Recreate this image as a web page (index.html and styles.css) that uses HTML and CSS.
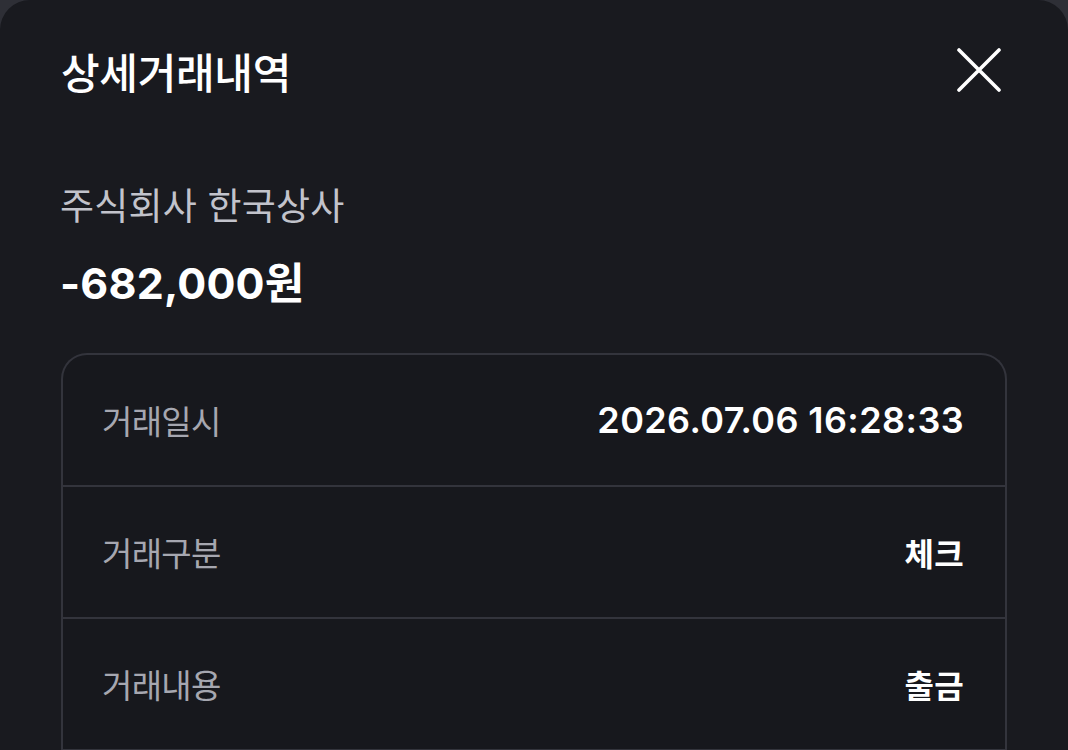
FILE: index.html
```html
<!DOCTYPE html>
<html lang="ko">
<head>
<meta charset="utf-8">
<link rel="stylesheet" href="styles.css">
</head>
<body>
<div class="sheet">
  <header class="header">
    <h1 class="title">상세거래내역</h1>
    <button class="close" aria-label="닫기">
      <svg width="44" height="44" viewBox="0 0 44 44"><path d="M2 2 L42 42 M42 2 L2 42" stroke="#fff" stroke-width="3.6" stroke-linecap="round" fill="none"/></svg>
    </button>
  </header>
  <section class="summary">
    <div class="merchant">주식회사 한국상사</div>
    <div class="amount">-682,000원</div>
  </section>
  <div class="card">
    <div class="row"><span class="label">거래일시</span><span class="value num">2026.07.06 16:28:33</span></div>
    <div class="row"><span class="label">거래구분</span><span class="value">체크</span></div>
    <div class="row"><span class="label">거래내용</span><span class="value">출금</span></div>
  </div>
</div>
</body>
</html>
```
FILE: styles.css
```css
html, body {
  margin: 0;
  padding: 0;
  height: 100%;
  background: #2e2f36;
  overflow: hidden;
}
body {
  font-family: Inter, "Noto Sans CJK KR", sans-serif;
  color: #fff;
}
.sheet {
  box-sizing: border-box;
  height: 100%;
  background: #191a1f;
  border-radius: 30px 30px 0 0;
  padding: 0 61px 0 61px;
}
.header {
  display: flex;
  align-items: center;
  justify-content: space-between;
  height: 140px;
}
.title {
  margin: 0;
  font-size: 42px;
  font-weight: 500;
  letter-spacing: -0.3px;
  color: #fff;
}
.close {
  background: none;
  border: 0;
  padding: 0;
  margin-right: 6px;
  display: flex;
}
.summary {
  padding-top: 43px;
}
.merchant {
  font-size: 37px;
  color: #c2c3cb;
  line-height: 48px;
  letter-spacing: 0.2px;
  margin-left: -1px;
}
.amount {
  font-size: 43px;
  font-weight: 700;
  line-height: 48px;
  margin-top: 28px;
  letter-spacing: 0.2px;
  margin-left: -1px;
}
.card {
  margin-top: 46px;
  border: 2px solid #33343c;
  border-bottom: 0;
  border-radius: 26px 26px 0 0;
  background: #17181d;
}
.row {
  display: flex;
  justify-content: space-between;
  align-items: center;
  height: 130px;
  padding: 0 41px 0 39px;
  border-bottom: 2px solid #33343c;
}
.label {
  font-size: 33px;
  color: #a6a7b0;
  letter-spacing: -0.7px;
}
.value {
  font-size: 32px;
  font-weight: 600;
  color: #fff;
  letter-spacing: 0.3px;
}
.value.num {
  font-size: 36px;
  letter-spacing: 0.4px;
}
```
